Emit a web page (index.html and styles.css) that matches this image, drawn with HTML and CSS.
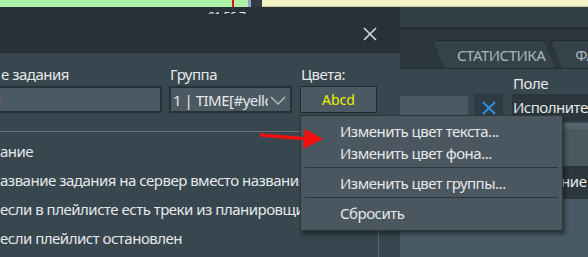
FILE: index.html
```html
<!DOCTYPE html>
<html lang="ru">

<head>
    <meta charset="UTF-8">
    <title>Задание</title>
    <link rel="stylesheet" href="styles.css">
</head>

<body>
    <div class="desktop">
        <!-- Timeline strip of the main window -->
        <div class="timeline">
            <div class="track track-green"><span class="marker"></span></div>
            <div class="track-edge"></div>
            <div class="track-gap"></div>
            <div class="track track-yellow"></div>
        </div>

        <div class="workspace">
            <div class="time-row"><span class="time-label">01:56:7</span></div>

            <!-- Right side of the main window, visible beside the dialog -->
            <div class="side">
                <div class="band"></div>
                <div class="band band-dark"></div>
                <div class="tabbar">
                    <div class="tab tab-current"></div>
                    <div class="tab"><span>СТАТИСТИКА</span></div>
                    <div class="tab"><span>ФАЙЛЫ</span></div>
                </div>
                <div class="panel">
                    <div class="panel-label">Поле</div>
                    <div class="panel-row">
                        <div class="panel-input"></div>
                        <div class="panel-clear">
                            <svg width="14" height="14" viewBox="0 0 14 14">
                                <path d="M1 1 L13 13 M13 1 L1 13" stroke="#2e8ee6" stroke-width="2" fill="none" />
                            </svg>
                        </div>
                        <div class="panel-field">Исполнитель</div>
                    </div>
                    <div class="panel-strip"></div>
                    <div class="panel-grid"></div>
                    <div class="panel-cell">Название</div>
                    <div class="panel-empty"></div>
                </div>
            </div>
        </div>

        <!-- Task dialog -->
        <div class="dialog">
            <div class="dialog-title">
                <svg class="close" width="14" height="14" viewBox="0 0 14 14">
                    <path d="M1 1 L13 13 M13 1 L1 13" stroke="#d4d8da" stroke-width="1.6" fill="none" />
                </svg>
            </div>
            <div class="dialog-body">
                <div class="fields">
                    <label class="field-label">е задания</label>
                    <label class="field-label">Группа</label>
                    <label class="field-label">Цвета:</label>
                    <div class="input"><span class="input-text">а</span></div>
                    <div class="select">
                        <span class="select-text">1 | TIME[#yellow]</span>
                        <svg width="16" height="9" viewBox="0 0 16 9">
                            <path d="M1 1 L8 8 L15 1" stroke="#aab3b8" stroke-width="1.5" fill="none" />
                        </svg>
                    </div>
                    <div class="color-button">Abcd</div>
                </div>
                <div class="separator"></div>
                <div class="options">
                    <div class="option">ание</div>
                    <div class="option">азвание задания на сервер вместо названия</div>
                    <div class="option">если в плейлисте есть треки из планировщика</div>
                    <div class="option">если плейлист остановлен</div>
                </div>
            </div>
        </div>

        <!-- Context menu of the colour button -->
        <div class="menu">
            <div class="menu-item">Изменить цвет текста...</div>
            <div class="menu-item">Изменить цвет фона...</div>
            <div class="menu-sep"></div>
            <div class="menu-item">Изменить цвет группы...</div>
            <div class="menu-sep"></div>
            <div class="menu-item">Сбросить</div>
        </div>

        <svg class="arrow" width="80" height="30" viewBox="0 0 80 30">
            <path d="M2 7 L50 11" stroke="#f01010" stroke-width="3.5" fill="none" />
            <path d="M47 1 L65 11 L45 21 Z" fill="#f01010" />
        </svg>
    </div>
</body>

</html>
```

FILE: styles.css
```css
body {
    margin: 0;
    font-family: "Noto Sans", "Open Sans", sans-serif;
    font-size: 15px;
    letter-spacing: -0.5px;
    color: #e6e8e9;
    background: #2a353b;
    overflow: hidden;
}

.desktop {
    position: relative;
    width: 588px;
    height: 257px;
    overflow: hidden;
}

/* timeline */
.timeline {
    display: flex;
    height: 7px;
}

.track-green {
    position: relative;
    width: 248px;
    background: #aef2a8;
}

.marker {
    position: absolute;
    left: 232px;
    top: 0;
    width: 2px;
    height: 7px;
    background: #e01010;
}

.track-edge {
    width: 3px;
    background: #8ea4d8;
}

.track-gap {
    width: 11px;
    background: #303c43;
}

.track-yellow {
    flex: 1;
    background: #f2f2c4;
    border-bottom: 1px solid #c9c9a4;
}

/* main window */
.workspace {
    display: flex;
    height: 250px;
}

.time-row {
    flex: none;
    width: 400px;
    background: #283238;
}

.time-label {
    display: block;
    margin: 3px 0 0 208px;
    font-size: 12px;
    line-height: 14px;
    color: #e4e8ea;
}

.side {
    flex: 1;
    min-width: 0;
    display: flex;
    flex-direction: column;
    background: #37474f;
}

.band {
    height: 20px;
    background: #323f46;
}

.band-dark {
    height: 4px;
    background: #263035;
}

.tabbar {
    display: flex;
    height: 37px;
    align-items: flex-end;
    background: #2d383e;
    border-bottom: 1px solid #262f34;
    overflow: hidden;
}

.tab {
    flex: none;
    position: relative;
    height: 28px;
    padding: 0 22px 0 14px;
    margin-right: -6px;
    color: #aab6bc;
    line-height: 30px;
}

.tab::before {
    content: "";
    position: absolute;
    left: 0;
    right: 10px;
    top: 0;
    bottom: -1px;
    background: #34424a;
    border: 1px solid #232c31;
    border-bottom: none;
    border-radius: 5px 5px 0 0;
    transform: skewX(22deg);
    transform-origin: bottom left;
}

.tab span {
    position: relative;
}

.tab-current {
    width: 43px;
    padding: 0;
    margin-right: 0;
}

.tab-current::before {
    display: none;
}

.panel {
    flex: 1;
    display: flex;
    flex-direction: column;
}

.panel-label {
    height: 25px;
    padding-left: 113px;
    line-height: 28px;
}

.panel-row {
    display: flex;
    height: 29px;
    align-items: flex-start;
}

.panel-input {
    flex: none;
    width: 68px;
    height: 20px;
    margin-top: 2px;
    background: #4a5963;
}

.panel-clear {
    flex: none;
    width: 29px;
    height: 27px;
    margin-left: 6px;
    display: flex;
    align-items: center;
    justify-content: center;
    background: #2e3b42;
}

.panel-field {
    flex: 1;
    min-width: 0;
    height: 27px;
    margin-left: 9px;
    padding-left: 1px;
    line-height: 27px;
    background: #2b373d;
    white-space: nowrap;
    overflow: hidden;
}

.panel-strip {
    height: 6px;
    background: #566670;
}

.panel-grid {
    height: 37px;
    background: #4a5860;
}

.panel-cell {
    height: 33px;
    padding-left: 120px;
    line-height: 30px;
    background: #2b373d;
    white-space: nowrap;
    overflow: hidden;
}

.panel-empty {
    flex: 1;
    background: #475a65;
}

/* dialog */
.dialog {
    position: absolute;
    left: 0;
    top: 14px;
    width: 400px;
    height: 243px;
    display: flex;
    flex-direction: column;
    background: #37464f;
}

.dialog-title {
    height: 40px;
    display: flex;
    align-items: center;
    justify-content: flex-end;
    padding-right: 23px;
    background: #283137;
}

.dialog-body {
    flex: 1;
    padding: 11px 22px 0 0;
}

.fields {
    display: grid;
    grid-template-columns: 162px 123px 78px;
    column-gap: 7px;
    row-gap: 2px;
}

.fields > :nth-child(3),
.fields > :nth-child(6) {
    margin-left: 1px;
}

.field-label {
    height: 20px;
    line-height: 20px;
    padding-left: 1px;
}

.input {
    height: 23px;
    margin-left: -2px;
    border: 2px solid #263238;
    background: #4b5962;
    overflow: hidden;
}

.input-text {
    display: block;
    margin-left: -7px;
    line-height: 23px;
    color: #b0504c;
}

.select {
    display: flex;
    align-items: center;
    height: 23px;
    border: 2px solid #263238;
    background: #4b5962;
    overflow: hidden;
}

.select-text {
    flex: 1;
    min-width: 0;
    padding-left: 2px;
    white-space: nowrap;
    overflow: hidden;
}

.select svg {
    flex: none;
    margin: 1px 4px 0 2px;
}

.color-button {
    height: 25px;
    border: 1px solid #222b30;
    background: #4b5962;
    color: #eef000;
    font-size: 14px;
    letter-spacing: 0;
    line-height: 25px;
    text-align: center;
}

.separator {
    height: 1px;
    margin-top: 18px;
    background: #66737a;
}

.options {
    padding-top: 5px;
    border-right: 1px solid #5c6a72;
    margin-right: -1px;
    height: 120px;
}

.option {
    height: 29px;
    line-height: 29px;
    white-space: nowrap;
    overflow: hidden;
}

/* popup menu */
.menu {
    position: absolute;
    left: 300px;
    top: 115px;
    width: 261px;
    padding: 4px 0 6px;
    background: #4b5760;
    border: 1px solid #2c353a;
    box-shadow: 2px 3px 4px rgba(0, 0, 0, 0.45);
}

.menu-item {
    height: 22px;
    padding-left: 39px;
    line-height: 22px;
}

.menu-sep {
    height: 1px;
    margin: 3px 4px 4px;
    background: #2b3439;
}

.arrow {
    position: absolute;
    left: 258px;
    top: 128px;
}
```
